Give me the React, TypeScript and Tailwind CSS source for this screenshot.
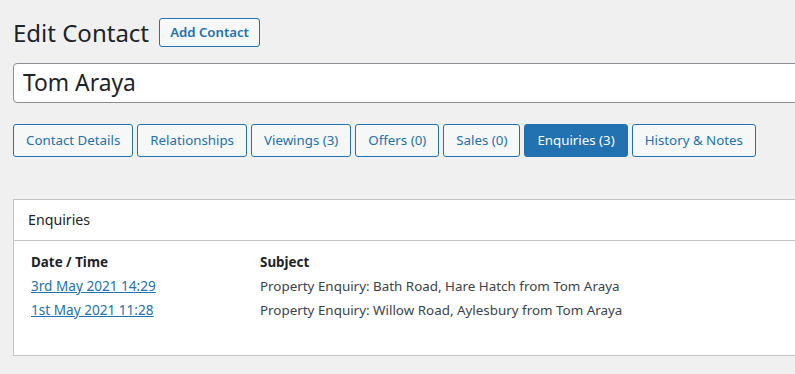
import React from "react";

const tabs = [
  { label: "Contact Details" },
  { label: "Relationships" },
  { label: "Viewings (3)" },
  { label: "Offers (0)" },
  { label: "Sales (0)" },
  { label: "Enquiries (3)", active: true },
  { label: "History & Notes" },
];

const rows = [
  { date: "3rd May 2021 14:29", subject: "Property Enquiry: Bath Road, Hare Hatch from Tom Araya" },
  { date: "1st May 2021 11:28", subject: "Property Enquiry: Willow Road, Aylesbury from Tom Araya" },
];

export default function App() {
  return (
    <div
      className="w-[795px] h-[374px] overflow-hidden bg-[#f0f0f1] text-[#3c434a]"
      style={{ fontFamily: '"Noto Sans", "Open Sans", sans-serif' }}
    >
      <div className="pl-[13px] pt-[18px]">
        <div className="flex items-center h-[29px]">
          <h1 className="text-[24px] leading-[29px] text-[#1d2327] font-normal">Edit Contact</h1>
          <button className="ml-[10px] h-[29px] w-[101px] rounded-[3px] border border-[#2271b1] bg-[#f6f7f7] text-[#2271b1] text-[13.2px] font-semibold">
            Add Contact
          </button>
        </div>
        <div className="mt-[16px] h-[40px] w-[800px] rounded-[4px] border border-[#8c8f94] bg-white flex items-center pl-[9px]">
          <span className="text-[22.8px] text-[#1d2327]">Tom Araya</span>
        </div>
        <div className="mt-[21px] flex gap-[4px]">
          {tabs.map((t) => (
            <div
              key={t.label}
              className={
                t.active
                  ? "h-[33px] px-[12px] rounded-[3px] border border-[#2271b1] bg-[#2271b1] text-white text-[13.3px] flex items-center whitespace-nowrap"
                  : "h-[33px] px-[12px] rounded-[3px] border border-[#2271b1] bg-[#f6f7f7] text-[#2271b1] text-[13.3px] flex items-center whitespace-nowrap"
              }
            >
              {t.label}
            </div>
          ))}
        </div>
        <div className="mt-[42px] w-[800px] h-[157px] border border-[#c3c4c7] bg-white">
          <div className="h-[41px] border-b border-[#c3c4c7] flex items-center pl-[14px]">
            <span className="text-[14.2px] text-[#1d2327]">Enquiries</span>
          </div>
          <div className="pl-[17px] pt-[9px] text-[13.4px]">
            <div className="flex h-[24px] items-center font-bold text-[#1d2327]">
              <div className="w-[229px]">Date / Time</div>
              <div>Subject</div>
            </div>
            {rows.map((r) => (
              <div key={r.date} className="flex h-[24px] items-center">
                <div className="w-[229px]">
                  <a className="text-[#2271b1] underline text-[13.6px]">{r.date}</a>
                </div>
                <div>{r.subject}</div>
              </div>
            ))}
          </div>
        </div>
      </div>
    </div>
  );
}
